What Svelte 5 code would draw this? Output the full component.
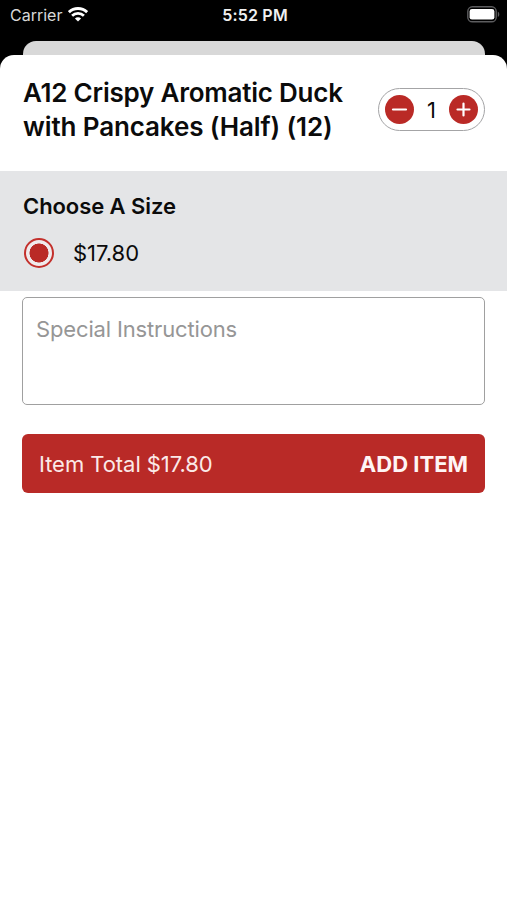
<script lang="ts">
	const unit_price = 17.8;

	let quantity = $state(1);
	let size = $state('regular');
	let instructions = $state('');

	let total = $derived((unit_price * quantity).toFixed(2));

	function decrease() {
		if (quantity > 1) quantity -= 1;
	}

	function increase() {
		quantity += 1;
	}
</script>

<div class="screen">
	<div class="status-bar">
		<div class="carrier">
			<span class="carrier-name">Carrier</span>
			<svg class="wifi" width="20" height="15" viewBox="0 0 20 15" fill="none" stroke="#fff">
				<path d="M0.9 5.2a13 13 0 0 1 18.2 0" stroke-width="2.8" />
				<path d="M4.1 8.8a8.2 8.2 0 0 1 11.8 0" stroke-width="2.7" />
				<path d="M10 14.6L6.900 11.600a4.400 4.400 0 0 1 6.200 0z" fill="#fff" stroke="none" />
			</svg>
		</div>
		<span class="time">5:52 PM</span>
		<svg class="battery" width="33" height="17" viewBox="0 0 33 17">
			<rect x="0.8" y="0.8" width="28.4" height="15" rx="4.6" fill="none" stroke="#5c5c5e" stroke-width="1.4" />
			<rect x="2.600" y="3" width="24.800" height="10.600" rx="2.4" fill="#fff" />
			<path d="M30.8 5.8c2 .6 2 4.6 0 5.2z" fill="#5c5c5e" />
		</svg>
	</div>

	<div class="sheet-behind"></div>

	<main class="sheet">
		<header>
			<h1>A12 Crispy Aromatic Duck<br /><span class="second-line">with Pancakes (Half) (12)</span></h1>
			<div class="stepper">
				<button aria-label="Decrease quantity" onclick={decrease}>
					<svg width="29" height="29" viewBox="0 0 29 29">
						<path d="M8 14.5H21" />
					</svg>
				</button>
				<span class="quantity">{quantity}</span>
				<button aria-label="Increase quantity" onclick={increase}>
					<svg width="29" height="29" viewBox="0 0 29 29">
						<path d="M8.500 14.5H20.500M14.5 8.500V20.500" />
					</svg>
				</button>
			</div>
		</header>

		<section class="sizes">
			<h2>Choose A Size</h2>
			<label>
				<input type="radio" name="size" value="regular" bind:group={size} />
				<span class="radio"></span>
				<span class="price">${unit_price.toFixed(2)}</span>
			</label>
		</section>

		<div class="order">
			<textarea placeholder="Special Instructions" bind:value={instructions}></textarea>
			<button class="add-item">
				<span class="item-total">Item Total ${total}</span>
				<span class="add-label">ADD ITEM</span>
			</button>
		</div>
	</main>
</div>

<style>
	:global(body) {
		margin: 0;
		background: #000;
	}

	.screen {
		height: 900px;
		display: flex;
		flex-direction: column;
		overflow: hidden;
		background: #000;
		color: #0b0b0b;
		font-family: Inter, 'Liberation Sans', sans-serif;
	}

	.status-bar {
		box-sizing: border-box;
		height: 41px;
		padding: 5px 7px 0 10px;
		display: grid;
		grid-template-columns: 1fr auto 1fr;
		align-items: start;
		color: #fff;
		font-size: 16px;
		line-height: 20px;
	}

	.carrier {
		display: flex;
		gap: 6px;
		color: #d8d8d8;
	}

	.carrier-name {
		letter-spacing: 0;
	}

	.wifi {
		margin-top: 2px;
	}

	.time {
		font-weight: 600;
		letter-spacing: 0.2px;
		color: #f0f0f0;
	}

	.battery {
		justify-self: end;
		margin-top: 1px;
	}

	.sheet-behind {
		height: 14px;
		margin: 0 22px 0 23px;
		border-radius: 13px 13px 0 0;
		background: #d8d8d8;
	}

	.sheet {
		flex: 1;
		border-radius: 14px 14px 0 0;
		background: #fff;
	}

	header {
		box-sizing: border-box;
		height: 116px;
		padding: 21px 22px 0 23px;
		display: flex;
		justify-content: space-between;
		align-items: flex-start;
	}

	h1 {
		margin: 0;
		font-size: 26px;
		font-weight: 600;
		line-height: 34px;
		letter-spacing: -0.22px;
		white-space: nowrap;
	}

	.second-line {
		letter-spacing: -0.12px;
	}

	button {
		border: none;
		padding: 0;
		font-family: inherit;
		cursor: pointer;
	}

	.stepper {
		box-sizing: border-box;
		width: 107px;
		height: 43px;
		margin-top: 12px;
		padding: 0 6px;
		display: flex;
		justify-content: space-between;
		align-items: center;
		border: 1.5px solid #a4a4a6;
		border-radius: 22px;
	}

	.stepper button {
		width: 29px;
		height: 29px;
		border-radius: 50%;
		background: #ba2a26;
	}

	.stepper svg {
		display: block;
		fill: none;
		stroke: #fff;
		stroke-width: 2.2;
		stroke-linecap: round;
	}

	.quantity {
		font-size: 22px;
	}

	.sizes {
		box-sizing: border-box;
		height: 120px;
		padding: 21px 23px 0;
		background: #e4e5e7;
	}

	h2 {
		margin: 0;
		font-size: 22px;
		font-weight: 600;
		line-height: 28px;
		letter-spacing: -0.07px;
	}

	label {
		margin-top: 18px;
		padding-left: 1px;
		display: flex;
		align-items: center;
	}

	input {
		position: absolute;
		opacity: 0;
	}

	.radio {
		box-sizing: border-box;
		width: 30px;
		height: 30px;
		border: 2px solid #c3302c;
		border-radius: 50%;
	}

	input:checked + .radio {
		background: radial-gradient(circle, #ba2a26 9.2px, #f0eaec 9.8px);
	}

	.price {
		margin-left: 19px;
		font-size: 22px;
		line-height: 30px;
		letter-spacing: 0;
	}

	.order {
		padding: 6px 22px 0;
		display: flex;
		flex-direction: column;
	}

	textarea {
		box-sizing: border-box;
		height: 108px;
		padding: 16px 13px;
		border: 1.5px solid #a0a0a0;
		border-radius: 5px;
		outline: none;
		resize: none;
		font-family: inherit;
		font-size: 22px;
		line-height: 30px;
		letter-spacing: -0.15px;
	}

	textarea::placeholder {
		color: #969696;
	}

	.add-item {
		height: 59px;
		margin-top: 29px;
		padding: 0 17px;
		display: flex;
		justify-content: space-between;
		align-items: center;
		border-radius: 6px;
		background: #b92a27;
		color: #fbe9e8;
		font-size: 22px;
	}

	.item-total {
		letter-spacing: -0.05px;
	}

	.add-label {
		font-weight: 700;
		color: #fff5f5;
	}
</style>
